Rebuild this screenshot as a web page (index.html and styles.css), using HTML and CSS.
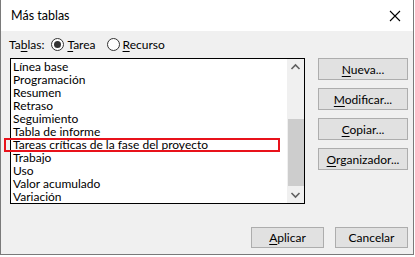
FILE: index.html
```html
<!DOCTYPE html>
<html lang="es">
<head>
  <meta charset="UTF-8">
  <title>Más tablas</title>
  <link rel="stylesheet" href="styles.css">
</head>
<body>
  <div class="dialog">
    <div class="titlebar">
      <span class="title">Más tablas</span>
      <svg class="close" width="12" height="12" viewBox="0 0 12 12">
        <path d="M1 1 L11 11 M11 1 L1 11" stroke="#000" stroke-width="1.1" fill="none"/>
      </svg>
    </div>
    <div class="content">
      <div class="kind-row">
        <span>Ta<u>b</u>las:</span>
        <label class="radio"><span class="dot checked"></span><span><u>T</u>area</span></label>
        <label class="radio"><span class="dot"></span><span><u>R</u>ecurso</span></label>
      </div>
      <div class="main">
        <div class="listbox">
          <ul class="items">
            <li>Línea base</li>
            <li>Programación</li>
            <li>Resumen</li>
            <li>Retraso</li>
            <li>Seguimiento</li>
            <li>Tabla de informe</li>
            <li>Tareas críticas de la fase del proyecto</li>
            <li>Trabajo</li>
            <li>Uso</li>
            <li>Valor acumulado</li>
            <li>Variación</li>
          </ul>
          <div class="scrollbar">
            <svg class="arrow" width="17" height="17" viewBox="0 0 17 17">
              <path d="M4.5 10 L8.5 6 L12.5 10" stroke="#606060" stroke-width="1.6" fill="none"/>
            </svg>
            <div class="track"><div class="thumb"></div></div>
            <svg class="arrow" width="17" height="17" viewBox="0 0 17 17">
              <path d="M4.5 7 L8.5 11 L12.5 7" stroke="#606060" stroke-width="1.6" fill="none"/>
            </svg>
          </div>
          <div class="highlight"></div>
        </div>
        <div class="side">
          <button class="btn"><u>N</u>ueva...</button>
          <button class="btn"><u>M</u>odificar...</button>
          <button class="btn"><u>C</u>opiar...</button>
          <button class="btn"><u>O</u>rganizador...</button>
        </div>
      </div>
      <div class="footer">
        <button class="btn small"><u>A</u>plicar</button>
        <button class="btn small">Cancelar</button>
      </div>
    </div>
  </div>
</body>
</html>
```

FILE: styles.css
```css
body {
  margin: 0;
  font-family: Lato, 'Liberation Sans', Arial, sans-serif;
  font-size: 12px;
  color: #000;
  background: #fff;
}
u {
  text-decoration: underline;
  text-underline-offset: 2px;
}
.dialog {
  width: 412px;
  height: 254px;
  border: 1px solid #7a7a7a;
  border-top: none;
  display: flex;
  flex-direction: column;
  background: #f0f0f0;
}
.titlebar {
  height: 31px;
  background: #fff;
  display: flex;
  align-items: center;
  justify-content: space-between;
  padding: 0 12px 0 10px;
}
.title {
  font-size: 12.5px;
}
.content {
  flex: 1;
  display: flex;
  flex-direction: column;
  padding: 0 5px 0 8px;
}
.kind-row {
  display: flex;
  align-items: center;
  height: 27px;
  gap: 7px;
}
.radio {
  display: flex;
  align-items: center;
  gap: 3px;
  margin-right: 4px;
}
.dot {
  width: 11px;
  height: 11px;
  border: 1px solid #333;
  border-radius: 50%;
  background: #fff;
  position: relative;
}
.dot.checked::after {
  content: '';
  position: absolute;
  left: 2px;
  top: 2px;
  width: 7px;
  height: 7px;
  border-radius: 50%;
  background: #333;
}
.main {
  display: flex;
  justify-content: space-between;
}
.listbox {
  position: relative;
  margin-left: 1px;
  width: 293px;
  height: 144px;
  border: 1px solid #000;
  background: #fff;
  display: flex;
}
.items {
  list-style: none;
  margin: 0;
  padding: 1px 0 0 2px;
  flex: 1;
  overflow: hidden;
}
.items li {
  height: 13px;
  line-height: 13px;
  white-space: nowrap;
}
.scrollbar {
  width: 17px;
  background: #f0f0f0;
  display: flex;
  flex-direction: column;
}
.arrow {
  display: block;
}
.track {
  flex: 1;
  display: flex;
  flex-direction: column;
  justify-content: flex-end;
  padding: 0 0 0 1px;
}
.thumb {
  height: 67px;
  background: #cdcdcd;
}
.highlight {
  position: absolute;
  left: -7px;
  top: 79px;
  width: 272px;
  height: 10px;
  border: 2px solid #e8121b;
}
.side {
  display: flex;
  flex-direction: column;
  gap: 8px;
}
.btn {
  width: 90px;
  height: 22px;
  padding: 0;
  background: #e1e1e1;
  border: 1px solid #adadad;
  font-family: inherit;
  font-size: 12px;
  color: #000;
}
.footer {
  display: flex;
  justify-content: flex-end;
  gap: 11px;
  margin-top: 23px;
}
.btn.small {
  width: 73px;
  height: 21px;
}
```
